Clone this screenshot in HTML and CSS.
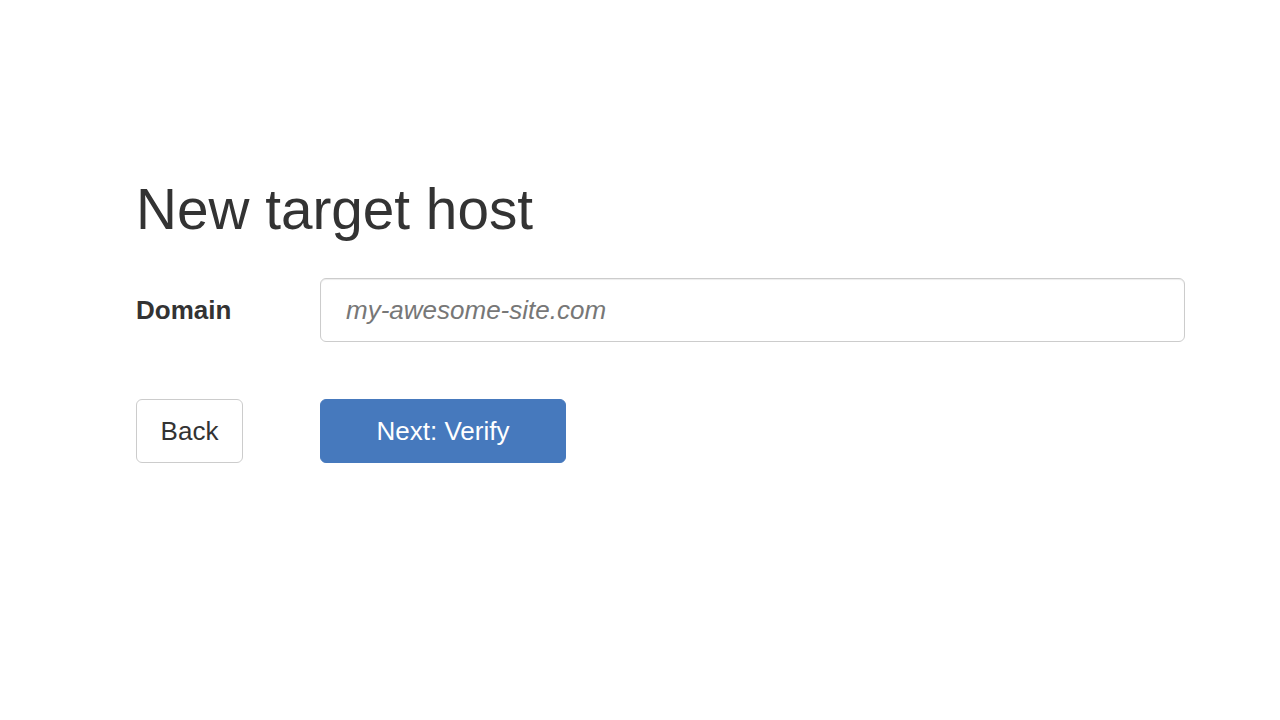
FILE: index.html
```html
<!DOCTYPE html>
<html>
<head>
<meta charset="utf-8">
<link rel="stylesheet" href="styles.css">
</head>
<body>
<main class="page">
  <h1 class="title">New target host</h1>
  <form class="form">
    <div class="row">
      <label class="label" for="domain">Domain</label>
      <input class="input" id="domain" type="text" placeholder="my-awesome-site.com">
    </div>
    <div class="row actions">
      <div class="label-col"><button type="button" class="btn btn-default">Back</button></div>
      <button type="button" class="btn btn-primary">Next: Verify</button>
    </div>
  </form>
</main>
</body>
</html>
```
FILE: styles.css
```css
* { box-sizing: border-box; }
html, body { margin: 0; padding: 0; background: #fff; }
body {
  font-family: "Liberation Sans", Arial, sans-serif;
  color: #333;
  font-size: 26px;
}
.page {
  padding: 175px 95px 0 136px;
}
.title {
  margin: 0 0 33px;
  font-size: 56.7px;
  font-weight: 400;
  line-height: 70px;
}
.form { display: flex; flex-direction: column; gap: 57px; }
.row { display: flex; align-items: center; }
.label, .label-col {
  width: 184px;
  flex: none;
}
.label { font-weight: 700; }
.input {
  flex: 1;
  height: 64px;
  border: 1px solid #ccc;
  border-radius: 6px;
  padding: 0 25px;
  font: inherit;
  color: #555;
  box-shadow: inset 0 1px 1px rgba(0,0,0,.075);
}
.input::placeholder { color: #777; font-style: italic; }
.btn {
  height: 64px;
  border-radius: 6px;
  font: inherit;
  padding: 0 23px;
  border: 1px solid #ccc;
  background: #fff;
  color: #333;
}
.btn-default { width: 107px; }
.btn-primary {
  width: 246px;
  background: #4679bd;
  border-color: #4679bd;
  color: #fff;
}
```
